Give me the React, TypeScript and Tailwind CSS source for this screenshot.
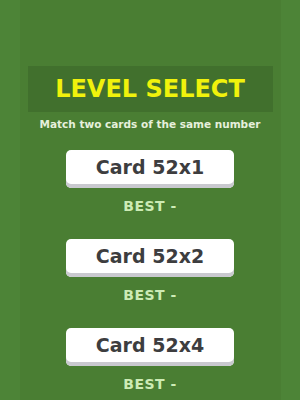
import React from 'react';

const levels = ['Card 52x1', 'Card 52x2', 'Card 52x4'];

export default function App() {
  return (
    <div
      className="w-[300px] h-[400px] overflow-hidden bg-[#4d8437] flex justify-center"
      style={{ fontFamily: '"DejaVu Sans", "Open Sans", sans-serif' }}
    >
      <div className="w-[261px] h-full bg-[#4a7e33] flex flex-col items-center pt-[66px]">
        <div className="w-[245px] h-[46px] bg-[#41702d] flex items-center justify-center">
          <span className="text-[24px] font-bold text-[#f0f20c] leading-none">LEVEL SELECT</span>
        </div>
        <div className="mt-[5px] text-[10.5px] font-bold text-[#e6f0dc] leading-[14px]">
          Match two cards of the same number
        </div>
        <div className="mt-[19px] flex flex-col items-center">
          {levels.map((l, i) => (
            <div key={l} className={'flex flex-col items-center ' + (i > 0 ? 'mt-[26px]' : '')}>
              <button className="w-[168px] h-[38px] bg-white rounded-[5px] shadow-[inset_0_-4px_0_#c9c9cf] flex items-center justify-center pb-[3px]">
                <span className="text-[19px] font-bold text-[#3d3d3f] leading-none">{l}</span>
              </button>
              <div className="mt-[11px] text-[14px] font-bold text-[#cdebb5] leading-none tracking-[0.5px]">BEST -</div>
            </div>
          ))}
        </div>
      </div>
    </div>
  );
}
